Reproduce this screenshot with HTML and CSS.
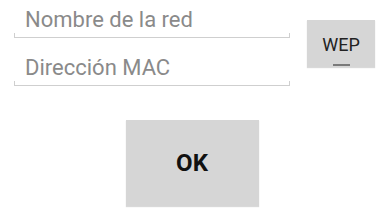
FILE: index.html
```html
<!DOCTYPE html>
<html lang="es">
<head>
    <meta charset="UTF-8">
    <meta name="viewport" content="width=device-width, initial-scale=1.0">
    <title>Red</title>
    <link rel="stylesheet" href="styles.css">
</head>
<body>
    <main class="screen">
        <div class="form-row">
            <div class="fields">
                <label class="field">
                    <span class="hint">Nombre de la red</span>
                </label>
                <label class="field">
                    <span class="hint">Dirección MAC</span>
                </label>
            </div>
            <button class="toggle-btn" type="button">
                <span class="toggle-label">WEP</span>
                <span class="toggle-bar"></span>
            </button>
        </div>
        <div class="actions">
            <button class="ok-btn" type="button">OK</button>
        </div>
    </main>
</body>
</html>
```

FILE: styles.css
```css
* {
    margin: 0;
    padding: 0;
    box-sizing: border-box;
    font-family: Roboto, 'Noto Sans', sans-serif;
}

body {
    background-color: #ffffff;
    width: 384px;
    height: 216px;
    overflow: hidden;
}

.form-row {
    display: flex;
    align-items: flex-start;
    padding-left: 14px;
}

.fields {
    width: 276px;
}

.field {
    display: block;
    position: relative;
    height: 48px;
    padding: 17px 0 0 11px;
    border-bottom: 1px solid #cfcfcf;
}

.field:first-child {
    height: 38px;
    padding-top: 7px;
}

.field::before,
.field::after {
    content: '';
    position: absolute;
    bottom: 0;
    width: 1px;
    height: 4px;
    background-color: #cfcfcf;
}

.field::before {
    left: 0;
}

.field::after {
    right: 0;
}

.hint {
    font-size: 22px;
    color: #8a8a8a;
    line-height: 26px;
}

.toggle-btn {
    display: flex;
    flex-direction: column;
    align-items: center;
    width: 68px;
    height: 47px;
    margin: 20px 0 0 17px;
    border: none;
    background-color: #d6d6d6;
    box-shadow: 0 1px 1px rgba(0, 0, 0, 0.15);
    padding-top: 16px;
}

.toggle-label {
    font-size: 18px;
    line-height: 18px;
    color: #222222;
}

.toggle-bar {
    width: 17px;
    height: 2px;
    margin-top: 10px;
    background-color: #7a7a7a;
}

.actions {
    display: flex;
    justify-content: center;
    padding-top: 34px;
}

.ok-btn {
    width: 133px;
    height: 86px;
    border: none;
    background-color: #d6d6d6;
    box-shadow: 0 1px 1px rgba(0, 0, 0, 0.15);
    font-size: 24px;
    font-weight: bold;
    color: #111111;
}
```
